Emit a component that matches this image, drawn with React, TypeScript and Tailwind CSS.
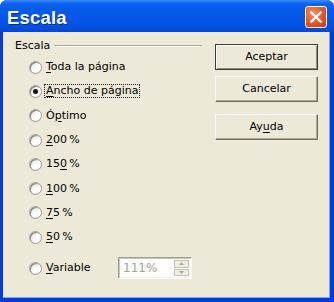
import React from 'react';

const Radio: React.FC<{ checked?: boolean }> = ({ checked }) => (
  <span className="relative flex h-[13px] w-[13px] shrink-0 items-center justify-center rounded-full border border-[#9c9a94] bg-[linear-gradient(135deg,#dcdad3_0%,#ffffff_55%,#ffffff_100%)] shadow-[inset_1px_1px_0_#8c8a84]">
    {checked && <span className="h-[5px] w-[5px] rounded-full bg-[#111]" />}
  </span>
);

const Option: React.FC<{ children: React.ReactNode; checked?: boolean; focus?: boolean }> = ({ children, checked, focus }) => (
  <div className="flex h-[24.3px] items-center">
    <Radio checked={checked} />
    <span className={focus ? 'ml-[3px] px-[1px] leading-[12px] outline outline-1 outline-dotted outline-[#222]' : 'ml-[4px] leading-[12px]'}>
      {children}
    </span>
  </div>
);

const Key: React.FC<{ children: React.ReactNode }> = ({ children }) => (
  <span className="underline decoration-1 underline-offset-[2px]">{children}</span>
);

const Button: React.FC<{ children: React.ReactNode; primary?: boolean }> = ({ children, primary }) => (
  <button
    className={
      'flex h-[26px] w-[103px] items-center justify-center bg-[#ece9d8] text-[11px] text-black ' +
      (primary
        ? 'border border-[#3c3c3c] shadow-[inset_1px_1px_0_#ffffff,inset_-1px_-1px_0_#8e8c84]'
        : 'border border-t-[#ffffff] border-l-[#ffffff] border-r-[#716f64] border-b-[#716f64] shadow-[inset_-1px_-1px_0_#aca899]')
    }
  >
    {children}
  </button>
);

export default function App() {
  return (
    <div className="flex h-[302px] w-[334px] flex-col overflow-hidden rounded-t-[7px] bg-[#0a3ad6] font-['DejaVu_Sans',sans-serif] text-[11px] text-black">
      {/* title bar */}
      <div className="flex h-[32px] shrink-0 items-center justify-between bg-[linear-gradient(180deg,#3d8cf7_0%,#0a60f0_12%,#0558e8_40%,#0354e4_75%,#0548d2_100%)] pl-[7px] pr-[7px]">
        <span className="mt-[3px] font-['Liberation_Sans',sans-serif] text-[18.5px] font-bold tracking-[0.2px] text-white [text-shadow:1px_1px_0_#0a2a8a]">
          Escala
        </span>
        <span className="mt-[1px] flex h-[22px] w-[22px] items-center justify-center rounded-[3px] border border-white bg-[radial-gradient(circle_at_35%_30%,#f28c68_0%,#e2552a_55%,#c63c18_100%)]">
          <svg width="12" height="12" viewBox="0 0 12 12">
            <path d="M1.5 1.5 L10.5 10.5 M10.5 1.5 L1.5 10.5" stroke="#fff" strokeWidth="2.4" strokeLinecap="square" />
          </svg>
        </span>
      </div>

      {/* body */}
      <div className="mb-[4px] ml-[3px] mr-[4px] flex flex-1 border-r border-b border-[#7fa6f2] bg-[#ece9d8]">
        <div className="flex flex-1 flex-col pl-[12px] pr-[1px] pt-[8px]">
          <div className="flex h-[12px] items-center leading-[12px]">
            <span>Escala</span>
            <span className="ml-[4px] h-[2px] flex-1 border-t border-b border-t-[#aca899] border-b-white" />
          </div>
          <div className="mt-[3px] flex flex-col pl-[14px]">
            <Option>
              <Key>T</Key>oda la página
            </Option>
            <Option checked focus>
              <Key>A</Key>ncho de página
            </Option>
            <Option>
              Ó<Key>p</Key>timo
            </Option>
            <Option>
              <Key>2</Key>00&#8201;%
            </Option>
            <Option>
              15<Key>0</Key>&#8201;%
            </Option>
            <Option>
              <Key>1</Key>00&#8201;%
            </Option>
            <Option>
              <Key>7</Key>5&#8201;%
            </Option>
            <Option>
              <Key>5</Key>0&#8201;%
            </Option>
            <div className="mt-[6.7px] flex h-[24.3px] items-center">
              <Radio />
              <span className="ml-[4px] w-[72px] leading-[12px]">
                <Key>V</Key>ariable
              </span>
              <div className="flex h-[22px] w-[74px] border border-t-[#a09d91] border-l-[#a09d91] border-r-white border-b-white">
                <div className="flex flex-1 border border-t-[#c9c6b8] border-l-[#c9c6b8] border-r-[#f4f2ea] border-b-[#f4f2ea] bg-white">
                  <span className="flex flex-1 items-center pl-[3px] text-[12px] text-[#a5a294]">111%</span>
                  <div className="flex w-[17px] flex-col gap-[1px] bg-white p-[1px]">
                    <span className="flex flex-1 items-center justify-center border border-[#c4c1b4] bg-[#efede4]">
                      <svg width="5" height="3" viewBox="0 0 5 3"><path d="M2.5 0 L5 3 L0 3 Z" fill="#aca899" /></svg>
                    </span>
                    <span className="flex flex-1 items-center justify-center border border-[#c4c1b4] bg-[#efede4]">
                      <svg width="5" height="3" viewBox="0 0 5 3"><path d="M0 0 L5 0 L2.5 3 Z" fill="#aca899" /></svg>
                    </span>
                  </div>
                </div>
              </div>
            </div>
          </div>
        </div>

        <div className="mr-[11px] ml-[12px] flex w-[103px] flex-col pt-[12px]">
          <Button primary>Aceptar</Button>
          <div className="mt-[6px]">
            <Button>Cancelar</Button>
          </div>
          <div className="mt-[12px]">
            <Button>
              Ay<Key>u</Key>da
            </Button>
          </div>
        </div>
      </div>
    </div>
  );
}
